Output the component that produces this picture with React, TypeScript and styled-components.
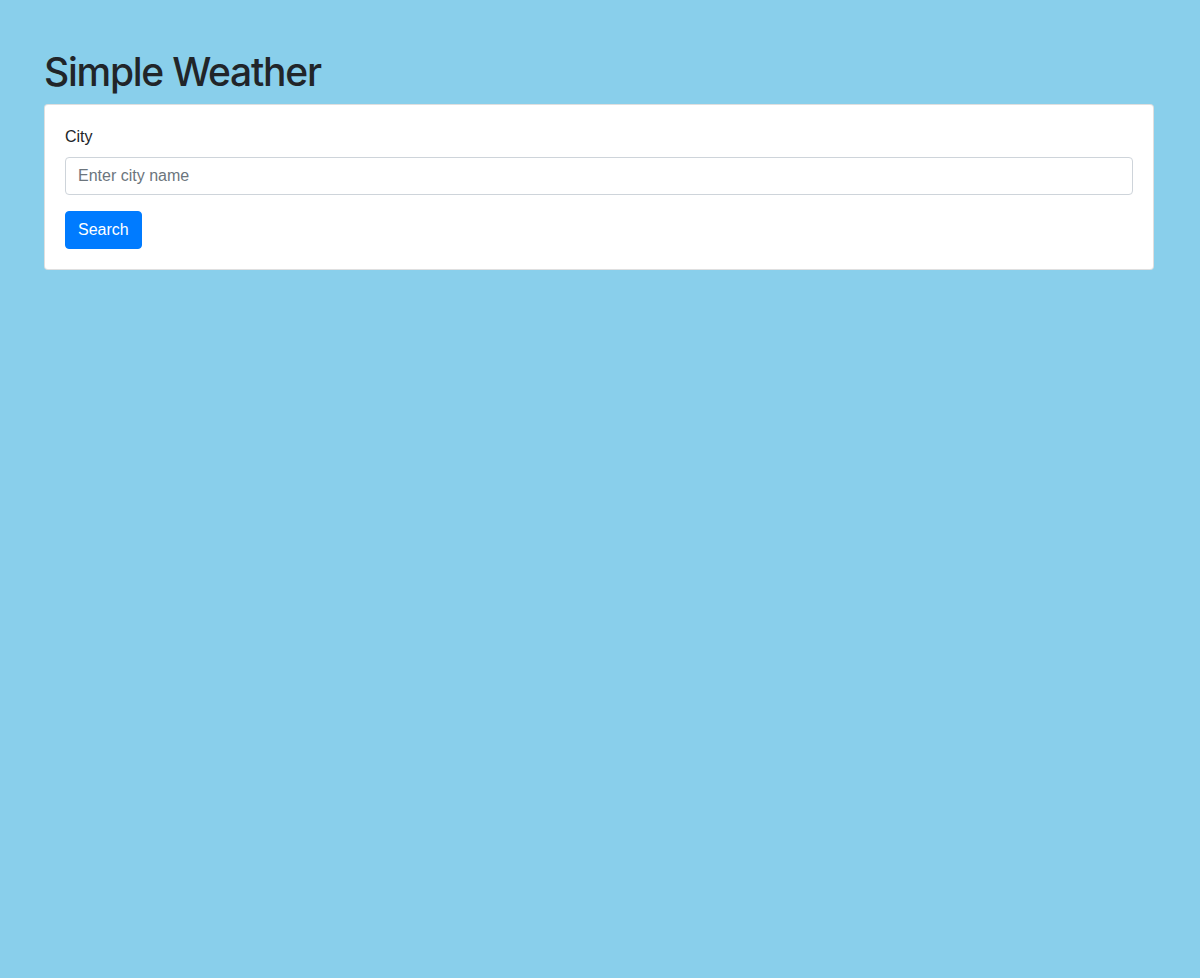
import React from "react";
import styled, { createGlobalStyle } from "styled-components";

const GlobalStyle = createGlobalStyle`
  *, *::before, *::after { box-sizing: border-box; }
  html, body { margin: 0; padding: 0; }
  body {
    background: #89cfeb;
    color: #212529;
    font-family: "Liberation Sans", Arial, sans-serif;
    font-size: 16px;
    line-height: 1.5;
    min-height: 978px;
  }
`;

const Container = styled.div`
  max-width: 1140px;
  margin: 0 auto;
  padding: 48px 16px 0 14px;
`;

const Title = styled.h1`
  margin: 0 0 8px;
  font-family: Inter, "Liberation Sans", sans-serif;
  font-size: 39px;
  font-weight: 500;
  letter-spacing: -1.25px;
  line-height: 48px;
  color: #212529;
`;

const Card = styled.div`
  background: #fff;
  border: 1px solid rgba(0, 0, 0, 0.125);
  border-radius: 4px;
`;

const CardBody = styled.form`
  padding: 20px;
`;

const FormGroup = styled.div`
  margin-bottom: 16px;
`;

const Label = styled.label`
  display: inline-block;
  margin-bottom: 8px;
`;

const Input = styled.input`
  display: block;
  width: 100%;
  height: 38px;
  padding: 6px 12px;
  font: inherit;
  font-size: 16px;
  color: #495057;
  background: #fff;
  border: 1px solid #ced4da;
  border-radius: 4px;
  outline: none;
  &::placeholder { color: #6c757d; opacity: 1; }
`;

const Button = styled.button`
  display: inline-block;
  height: 38px;
  padding: 6px 12px;
  font: inherit;
  font-size: 16px;
  color: #fff;
  background: #007bff;
  border: 1px solid #007bff;
  border-radius: 4px;
  cursor: pointer;
`;

export default function App() {
  return (
    <>
      <GlobalStyle />
      <Container>
        <Title>Simple Weather</Title>
        <Card>
          <CardBody onSubmit={(e) => e.preventDefault()}>
            <FormGroup>
              <Label htmlFor="city">City</Label>
              <Input id="city" type="text" placeholder="Enter city name" />
            </FormGroup>
            <Button type="submit">Search</Button>
          </CardBody>
        </Card>
      </Container>
    </>
  );
}
